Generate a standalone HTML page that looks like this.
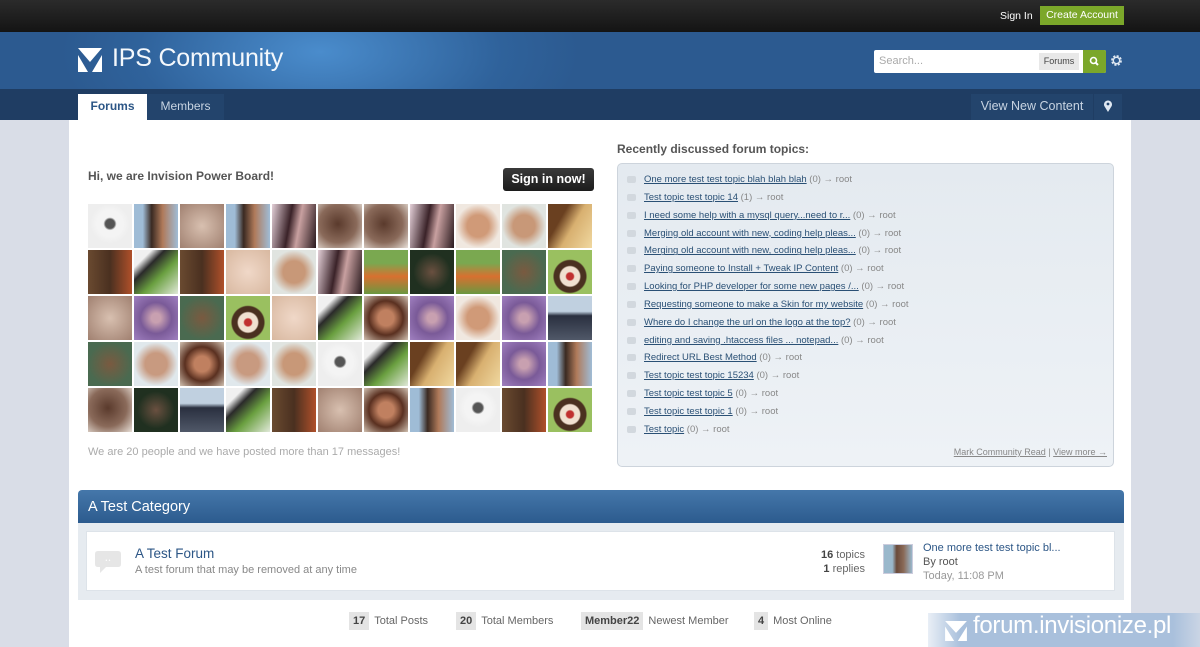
<!DOCTYPE html>
<html><head><meta charset="utf-8"><style>
*{margin:0;padding:0;box-sizing:border-box}
body{width:1200px;height:647px;overflow:hidden;background:#d9dde7;font-family:"Liberation Sans",Arial,sans-serif;font-size:12px;color:#555;position:relative}
#top{position:absolute;left:0;top:0;width:1200px;height:32px;background:linear-gradient(#2b2b2b,#141414)}
#top .si{position:absolute;left:1000px;top:10px;color:#fff;font-size:10.5px}
#top .ca{position:absolute;left:1040px;top:6px;width:84px;height:19px;background:#7ba72a;color:#fff;font-size:10.5px;text-align:center;line-height:19px}
#hdr{position:absolute;left:0;top:32px;width:1200px;height:57px;background:radial-gradient(ellipse 260px 120px at 320px 20px,#4a8ccc,#2f629b 70%,#2c5a90)}
#logo{position:absolute;left:78px;top:48px}
#logo span{position:absolute;left:34px;top:-4px;color:#f4f8fc;font-size:25px;white-space:nowrap;font-weight:normal;letter-spacing:-0.2px}
#search{position:absolute;left:874px;top:50px;width:232px;height:23px;background:#fff;border-radius:2px}
#search .ph{position:absolute;left:5px;top:5px;color:#aaa;font-size:11px}
#search .fo{position:absolute;left:165px;top:3px;width:40px;height:17px;background:#e8e8e8;font-size:9px;color:#444;text-align:center;line-height:17px}
#search .go{position:absolute;left:209px;top:0;width:23px;height:23px;background:#7ba72a;border-radius:0 2px 2px 0}
#nav{position:absolute;left:0;top:89px;width:1200px;height:31px;background:#1f3d63}
.tab{position:absolute;top:5px;height:26px;line-height:25px;font-size:12px;color:#c8d4e2}
#main{position:absolute;left:69px;top:120px;width:1062px;height:527px;background:#fff}
.h{font-weight:bold;color:#555;font-size:12px;position:absolute}
#grid{position:absolute;left:88px;top:204px;width:506px;height:230px}
#grid i{position:absolute;width:44px;height:44px}
#rec{position:absolute;left:617px;top:163px;width:497px;height:304px;background:linear-gradient(#e4eaf0,#eef2f6);border:1px solid #cdd4dc;border-radius:5px}
#rec ul{list-style:none;position:absolute;left:9px;top:10px}
#rec li{height:17.85px;font-size:9.5px;color:#888;white-space:nowrap;position:relative;padding-left:17px}
#rec li:before{content:"";position:absolute;left:0;top:2px;width:9px;height:7px;background:#d2d8de;border-radius:2px}
#rec a{color:#2a5075;text-decoration:underline}
.cat{position:absolute;left:78px;top:490px;width:1046px;height:33px;background:linear-gradient(#4577aa,#2c5b8e);border-radius:4px 4px 0 0;color:#fff;font-size:14.5px;line-height:34px;padding-left:10px}
.catb{position:absolute;left:78px;top:523px;width:1046px;height:77px;background:#e6ebf0}
.row{position:absolute;left:86px;top:531px;width:1029px;height:60px;background:#fff;border:1px solid #dde3e9}
.stat{position:absolute;top:612px;font-size:11px;color:#666;line-height:18px}
.stat b{display:inline-block;background:#e4e4e4;padding:0 4px;color:#444;margin-right:5px}
</style></head><body>
<div id="top"><span class="si">Sign In</span><div class="ca">Create Account</div></div>
<div id="hdr"></div>
<div id="logo"><svg width="24" height="24" viewBox="0 0 24 24"><path d="M0 0H24L12 14Z M0 7L10 24H0Z M24 7V24H14Z" fill="#fff"/></svg><span>IPS Community</span></div>
<div id="search"><span class="ph">Search...</span><div class="fo">Forums</div><div class="go"><svg width="23" height="23" viewBox="0 0 23 23"><circle cx="10.5" cy="10.5" r="3" fill="none" stroke="#fff" stroke-width="1.6"/><path d="M12.7 12.7L15 15" stroke="#fff" stroke-width="2"/></svg></div></div>
<svg style="position:absolute;left:1110px;top:54px" width="13" height="13" viewBox="0 0 13 13"><circle cx="6.5" cy="6.5" r="4.2" fill="none" stroke="#dfe8f2" stroke-width="2.4" stroke-dasharray="2 1.3"/><circle cx="6.5" cy="6.5" r="3.2" fill="none" stroke="#dfe8f2" stroke-width="1.4"/></svg>
<div id="nav">
<div class="tab" style="left:78px;width:69px;background:#fff;color:#2c5686;font-weight:bold;text-align:center">Forums</div>
<div class="tab" style="left:147px;width:77px;background:#23446c;text-align:center">Members</div>
<div class="tab" style="left:971px;width:122px;background:#23446c;text-align:center;font-size:12.5px">View New Content</div>
<div class="tab" style="left:1094px;width:28px;background:#23446c;text-align:center"><svg width="10" height="12" viewBox="0 0 10 12" style="margin-top:6px"><path d="M5 12L1.3 6A4 4 0 1 1 8.7 6Z" fill="#dfe8f2"/><circle cx="5" cy="4" r="1.4" fill="#23446c"/></svg></div>
</div>
<div id="main"></div>
<div class="h" style="left:88px;top:169px">Hi, we are Invision Power Board!</div>
<div style="position:absolute;left:503px;top:168px;width:91px;height:23px;background:linear-gradient(#3a3a3a,#1c1c1c);border-radius:3px;color:#fff;font-weight:bold;font-size:12.5px;text-align:center;line-height:23px">Sign in now!</div>
<div id="grid"></div>
<div style="position:absolute;left:88px;top:446px;color:#aaa;font-size:11px">We are 20 people and we have posted more than 17 messages!</div>
<div class="h" style="left:617px;top:142px">Recently discussed forum topics:</div>
<div id="rec"><ul>
<li><a>One more test test topic blah blah blah</a> (0) → root</li>
<li><a>Test topic test topic 14</a> (1) → root</li>
<li><a>I need some help with a mysql query...need to r...</a> (0) → root</li>
<li><a>Merging old account with new, coding help pleas...</a> (0) → root</li>
<li><a>Merging old account with new, coding help pleas...</a> (0) → root</li>
<li><a>Paying someone to Install + Tweak IP Content</a> (0) → root</li>
<li><a>Looking for PHP developer for some new pages /...</a> (0) → root</li>
<li><a>Requesting someone to make a Skin for my website</a> (0) → root</li>
<li><a>Where do I change the url on the logo at the top?</a> (0) → root</li>
<li><a>editing and saving .htaccess files ... notepad...</a> (0) → root</li>
<li><a>Redirect URL Best Method</a> (0) → root</li>
<li><a>Test topic test topic 15234</a> (0) → root</li>
<li><a>Test topic test topic 5</a> (0) → root</li>
<li><a>Test topic test topic 1</a> (0) → root</li>
<li><a>Test topic</a> (0) → root</li>
</ul>
<div style="position:absolute;right:6px;top:283px;font-size:9px;color:#888"><u>Mark Community Read</u> | <u>View more →</u></div></div>
<div class="cat">A Test Category</div>
<div class="catb"></div>
<div class="row">
<svg style="position:absolute;left:7px;top:17px" width="28" height="26" viewBox="0 0 28 26"><path d="M4 2H24Q27 2 27 5V15Q27 18 24 18H12L6 24V18H4Q1 18 1 15V5Q1 2 4 2Z" fill="#e6e6e6"/><text x="14" y="13" font-size="5" fill="#fff" text-anchor="middle" font-family="Liberation Sans">• •</text></svg>
<div style="position:absolute;left:48px;top:14px;font-size:13.5px;color:#2c5686">A Test Forum</div>
<div style="position:absolute;left:48px;top:32px;font-size:11px;color:#888">A test forum that may be removed at any time</div>
<div style="position:absolute;left:700px;top:16px;width:78px;text-align:right;font-size:11px;color:#666;line-height:14px"><b style="color:#444">16</b> topics<br><b style="color:#444">1</b> replies</div>
<div style="position:absolute;left:796px;top:12px;width:30px;height:30px;border:1px solid #ccd;background:linear-gradient(90deg,#9ab8cc 30%,#6a4a3a 45%,#8a6a58 70%,#9ab8cc)"></div>
<div style="position:absolute;left:836px;top:9px;font-size:11px;color:#2c5686;line-height:14px">One more test test topic bl...<br><span style="color:#555">By root</span><br><span style="color:#999">Today, 11:08 PM</span></div>
</div>
<div class="stat" style="left:349px"><b>17</b>Total Posts</div>
<div class="stat" style="left:456px"><b>20</b>Total Members</div>
<div class="stat" style="left:581px"><b>Member22</b>Newest Member</div>
<div class="stat" style="left:754px"><b>4</b>Most Online</div>
<div style="position:absolute;left:928px;top:613px;width:272px;height:34px;background:linear-gradient(90deg,rgba(180,200,225,.3),#a9c0dc 12%,#a9c0dc 90%,rgba(180,200,225,.4));"></div>
<svg style="position:absolute;left:945px;top:621px" width="22" height="20" viewBox="0 0 24 22"><path d="M0 0H24L12 13Z M0 6L10 22H0Z M24 6V22H14Z" fill="#fff"/></svg>
<div style="position:absolute;left:973px;top:612px;color:#fff;font-size:24px;letter-spacing:-0.3px">forum.invisionize.pl</div>
<script>
var P={pa:"radial-gradient(circle at 50% 45%,#555 0 14%,#f4f4f4 20% 40%,#eee 60%)",be:"linear-gradient(90deg,#9fbcd6 20%,#3a2a22 40%,#b07a5a 65%,#9fbcd6)",ow:"radial-gradient(circle,#d8c0b0,#a08070)",dw:"linear-gradient(100deg,#e4d0d8,#3a2228 40%,#c8a0a0 60%,#2a1a1e)",bm:"radial-gradient(circle at 45% 45%,#5a3a2c,#8a6a5a 55%,#e8e0d8)",gl:"radial-gradient(circle,#d09a78 35%,#f0e8e0 70%)",yo:"radial-gradient(circle,#c89878 35%,#e0e4e0 70%)",ca:"linear-gradient(120deg,#6a4020 30%,#d8b070 55%,#f0d8a0)",so:"linear-gradient(90deg,#6a4a30,#4a3020 50%,#b0502a)",gg:"linear-gradient(135deg,#f0f0f0 20%,#2a2a2a 35%,#6aa040 60%,#e0e8d8)",bl:"radial-gradient(circle,#f0d8c8,#d8b8a0)",di:"linear-gradient(#7aa850 30%,#d87030 60%,#6a9840)",fo:"radial-gradient(circle,#6a5040,#203020 60%)",or:"radial-gradient(circle,#7a5a40,#4a6a50 70%)",an:"radial-gradient(circle at 50% 60%,#c03030 0 10%,#f0e0d0 14% 28%,#4a3020 32% 46%,#9ac060 50%)",pu:"radial-gradient(circle,#c8a0b0 15%,#7a5a98 50%,#a080c0)",de:"linear-gradient(#c0d0e0 35%,#2a3040 45%,#505868)",ci:"radial-gradient(circle,#c08060 25%,#5a3020 55%,#d0c0b0)",y3:"radial-gradient(circle,#c89a80 35%,#e0e8ec 70%)"};
var R=["pa be ow be dw bm bm dw gl yo ca","so gg so bl yo dw di fo di or an","ow pu or an bl gg ci pu gl pu de","or y3 ci y3 yo pa gg ca ca pu be","bm fo de gg so ow ci be pa so an"];
var g=document.getElementById('grid'),h='';
R.forEach(function(r,y){r.split(' ').forEach(function(k,x){h+='<i style="left:'+(x*46)+'px;top:'+(y*46)+'px;background:'+P[k]+'"></i>';});});
g.innerHTML=h;
</script>
</body></html>
